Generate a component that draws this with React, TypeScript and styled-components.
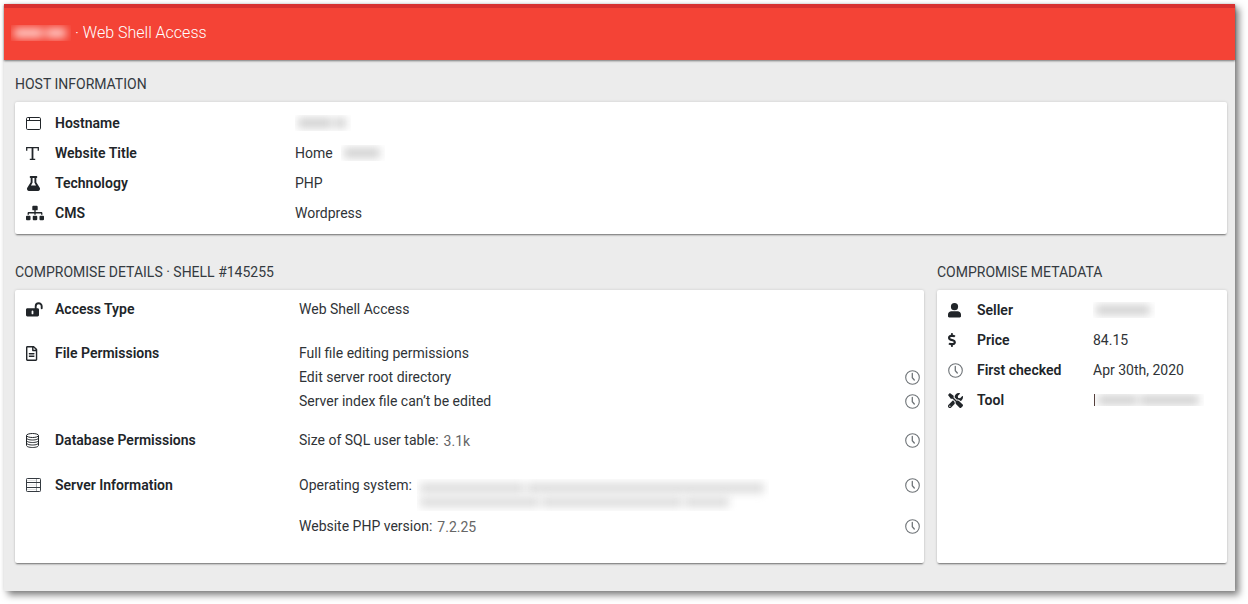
import React from "react";
import styled, { createGlobalStyle } from "styled-components";
import { FaFlask, FaSitemap, FaRegFileAlt, FaDollarSign, FaTools } from "react-icons/fa";

const GlobalStyle = createGlobalStyle`
  * { box-sizing: border-box; }
  body {
    margin: 0;
    background: #fff;
    color: #212529;
    font-family: Roboto, "Liberation Sans", sans-serif;
    font-size: 14px;
    line-height: 24px;
  }
`;

const Window = styled.div`
  margin: 4px 13px 13px 4px;
  background: #ececec;
  box-shadow: 4px 4px 7px rgba(0, 0, 0, 0.5), 0 0 4px rgba(0, 0, 0, 0.08);
`;

const TopBar = styled.header`
  position: relative;
  display: flex;
  align-items: center;
  height: 56px;
  padding: 0 7px 2px;
  border-top: 4px solid #d73130;
  background: #f44336;
  box-shadow: 0 1px 2px rgba(0, 0, 0, 0.5);
`;

const PageTitle = styled.h1`
  display: flex;
  align-items: center;
  gap: 4px;
  margin: 0;
  color: #fff;
  font-size: 16px;
  font-weight: 300;
`;

const Content = styled.main`
  padding: 12px 8px 28px 11px;
`;

const Columns = styled.div`
  display: grid;
  grid-template-columns: minmax(0, 1fr) 290px;
  gap: 13px;
  margin-top: 26px;
`;

const Section = styled.section`
  display: flex;
  flex-direction: column;
`;

const SectionTitle = styled.h2`
  margin: 0 0 6px;
  color: #343a40;
  font-size: 14px;
  font-weight: 400;
  text-transform: uppercase;
`;

const Card = styled.dl<{ $pad: string }>`
  flex: 1;
  margin: 0;
  padding: ${(p) => p.$pad};
  border-radius: 2px;
  background: #fff;
  box-shadow: 0 2px 2px -1px rgba(0, 0, 0, 0.5), 0 0 3px rgba(0, 0, 0, 0.14);
`;

const Row = styled.div<{ $label: number; $pad: string }>`
  display: grid;
  grid-template-columns: ${(p) => p.$label}px minmax(0, 1fr);
  padding: ${(p) => p.$pad};
`;

const Term = styled.dt`
  display: flex;
  align-items: center;
  height: 24px;
  font-weight: 600;
`;

const IconSlot = styled.span`
  display: flex;
  align-items: center;
  width: 29px;
  color: #212529;
`;

const Value = styled.dd`
  margin: 0;
  color: #2f3337;
`;

const Line = styled.div`
  display: flex;
  align-items: flex-start;
  gap: 5px;
`;

const Muted = styled.span`
  padding-top: 1px;
  color: #666;
`;

const HistoryButton = styled.button`
  display: flex;
  align-items: center;
  height: 24px;
  margin-left: auto;
  padding: 0;
  border: 0;
  background: none;
  color: #6f7478;
`;

const RedactedBox = styled.span<{ $w: number; $h: number; $m: string; $cut?: boolean }>`
  display: flex;
  flex-direction: column;
  justify-content: space-evenly;
  width: ${(p) => p.$w}px;
  height: ${(p) => p.$h}px;
  margin: ${(p) => p.$m};
  border-left: ${(p) => (p.$cut ? "1px solid #55403c" : "0")};
  overflow: hidden;
`;

const Smudge = styled.span<{ $ink: string; $w: string }>`
  display: flex;
  gap: 3px;
  width: ${(p) => p.$w};
  height: 10px;
  padding: 0 5px 0 3px;
  filter: blur(4px);

  i {
    background: ${(p) => p.$ink};
  }
`;

type RedactedProps = {
  w: number;
  h?: number;
  m?: string;
  ink?: string;
  cut?: boolean;
  lines?: { w?: string; words: number[] }[];
};

function Redacted({ w, h = 16, m = "4px 0", ink = "#d0d0d0", cut, lines = [{ words: [1] }] }: RedactedProps) {
  return (
    <RedactedBox $w={w} $h={h} $m={m} $cut={cut} aria-hidden="true">
      {lines.map((line, i) => (
        <Smudge key={i} $ink={ink} $w={line.w ?? "100%"}>
          {line.words.map((n, j) => (
            <i key={j} style={{ flexGrow: n }} />
          ))}
        </Smudge>
      ))}
    </RedactedBox>
  );
}

const ClockIcon = () => (
  <svg width="15" height="15" viewBox="0 0 15 15" fill="none" stroke="#6f7478" strokeWidth="1.1" strokeLinecap="round">
    <circle cx="7.5" cy="7.5" r="6.8" />
    <path d="M7.3 3.500v4.200l2 2.300" strokeWidth="1.3" />
  </svg>
);

const BrowserIcon = () => (
  <svg width="15" height="13" viewBox="0 0 15 13" fill="none" stroke="currentColor">
    <rect x=".5" y=".5" width="14" height="12" rx="1.2" />
    <path d="M.5 3.500h14M3.500 1v2.500" />
  </svg>
);

const TextIcon = () => (
  <svg width="13" height="13" viewBox="0 0 13 13" fill="none" stroke="currentColor" strokeWidth="1.3">
    <path d="M.7 3.700V.7h11.600v3M3.800 12.300h5.400" />
    <path d="M6.500 .7v11.600" strokeWidth="1.8" />
  </svg>
);

const UnlockIcon = () => (
  <svg width="17" height="15" viewBox="0 0 17 15">
    <path d="M9.700 7V4.200a3 3 0 0 1 6 0V6.200" fill="none" stroke="currentColor" strokeWidth="1.9" strokeLinecap="round" />
    <path
      d="M1.400 6.300h10.200c.8 0 1.400.6 1.400 1.400v5.400c0 .8-.6 1.400-1.400 1.400H1.400C.6 14.500 0 13.900 0 13.100V7.700c0-.8.6-1.400 1.400-1.400zM6.500 8.500a.9.9 0 0 0-.9.9v2a.9.9 0 0 0 1.800 0v-2a.9.9 0 0 0-.9-.9z"
      fill="currentColor"
    />
  </svg>
);

const DatabaseIcon = () => (
  <svg width="13" height="15" viewBox="0 0 13 15" fill="none" stroke="currentColor">
    <ellipse cx="6.500" cy="2.500" rx="6" ry="2" />
    <path d="M.5 2.500v10c0 1.100 2.700 2 6 2s6-.9 6-2v-10M.5 5c0 1.100 2.700 2 6 2s6-.9 6-2M.5 7.500c0 1.100 2.700 2 6 2s6-.9 6-2M.5 10c0 1.100 2.700 2 6 2s6-.9 6-2" />
  </svg>
);

const ServerIcon = () => (
  <svg width="15" height="14" viewBox="0 0 15 14" fill="none" stroke="#343a40">
    <rect x=".5" y=".5" width="14" height="13" rx=".8" />
    <path d="M.5 4.500h14M.5 9.500h14" />
    <path d="M10.500 .5v13" strokeOpacity=".45" />
    <path d="M1 2.500h9M1 7h9M1 11.500h9" strokeOpacity=".15" />
  </svg>
);

const UserIcon = () => (
  <svg width="13" height="15" viewBox="0 0 13 15" fill="currentColor">
    <circle cx="6.500" cy="3.700" r="3.600" />
    <path d="M3.400 8.200h6.200c1.900 0 3.400 1.500 3.400 3.400v1.700c0 .7-.5 1.200-1.200 1.200H1.200c-.7 0-1.200-.5-1.200-1.200v-1.700c0-1.900 1.500-3.400 3.400-3.400z" />
  </svg>
);

const History = ({ label }: { label: string }) => (
  <HistoryButton type="button" aria-label={label}>
    <ClockIcon />
  </HistoryButton>
);

type FieldProps = {
  icon: React.ReactNode;
  name: string;
  label: number;
  pad?: string;
  children: React.ReactNode;
};

function Field({ icon, name, label, pad = "3px 0", children }: FieldProps) {
  return (
    <Row $label={label} $pad={pad}>
      <Term>
        <IconSlot>{icon}</IconSlot>
        {name}
      </Term>
      <Value>{children}</Value>
    </Row>
  );
}

export default function App() {
  return (
    <>
      <GlobalStyle />
      <Window>
        <TopBar>
          <PageTitle>
            <Redacted w={60} ink="#ffcac5" lines={[{ words: [3, 2] }]} />
            · Web Shell Access
          </PageTitle>
        </TopBar>
        <Content>
          <Section>
            <SectionTitle>Host information</SectionTitle>
            <Card $pad="6px 4px 6px 11px">
              <Field icon={<BrowserIcon />} name="Hostname" label={269}>
                <Redacted w={56} lines={[{ words: [3, 1] }]} />
              </Field>
              <Field icon={<TextIcon />} name="Website Title" label={269}>
                <Line>
                  Home
                  <Redacted w={44} m="4px 3px" />
                </Line>
              </Field>
              <Field icon={<FaFlask size={15} />} name="Technology" label={269}>
                PHP
              </Field>
              <Field icon={<FaSitemap size={18} />} name="CMS" label={269}>
                Wordpress
              </Field>
            </Card>
          </Section>
          <Columns>
            <Section>
              <SectionTitle>Compromise details · Shell #145255</SectionTitle>
              <Card $pad="7px 4px 24px 11px">
                <Field icon={<UnlockIcon />} name="Access Type" label={273} pad="0 0 20px">
                  Web Shell Access
                </Field>
                <Field
                  icon={<FaRegFileAlt size={15} preserveAspectRatio="xMinYMid" />}
                  name="File Permissions"
                  label={273}
                  pad="0 0 15px"
                >
                  <Line>Full file editing permissions</Line>
                  <Line>
                    Edit server root directory
                    <History label="Root directory check history" />
                  </Line>
                  <Line>
                    Server index file can’t be edited
                    <History label="Index file check history" />
                  </Line>
                </Field>
                <Field icon={<DatabaseIcon />} name="Database Permissions" label={273} pad="0 0 20px">
                  <Line>
                    Size of SQL user table: <Muted>3.1k</Muted>
                    <History label="User table check history" />
                  </Line>
                </Field>
                <Field icon={<ServerIcon />} name="Server Information" label={273} pad="0">
                  <Line>
                    Operating system:
                    <Redacted
                      w={352}
                      h={32}
                      m="6px 0 3px"
                      ink="#dcdcdc"
                      lines={[{ words: [11, 25] }, { w: "90%", words: [11, 13, 4] }]}
                    />
                    <History label="Operating system check history" />
                  </Line>
                  <Line>
                    Website PHP version: <Muted>7.2.25</Muted>
                    <History label="PHP version check history" />
                  </Line>
                </Field>
              </Card>
            </Section>
            <Section>
              <SectionTitle>Compromise metadata</SectionTitle>
              <Card $pad="5px 4px 6px 11px">
                <Field icon={<UserIcon />} name="Seller" label={145}>
                  <Redacted w={62} />
                </Field>
                <Field icon={<FaDollarSign size={14} preserveAspectRatio="xMinYMid" />} name="Price" label={145}>
                  84.15
                </Field>
                <Field icon={<ClockIcon />} name="First checked" label={145}>
                  Apr 30th, 2020
                </Field>
                <Field icon={<FaTools size={15} />} name="Tool" label={145}>
                  <Redacted w={110} h={12} m="6px 1px" cut lines={[{ words: [2, 3] }]} />
                </Field>
              </Card>
            </Section>
          </Columns>
        </Content>
      </Window>
    </>
  );
}
